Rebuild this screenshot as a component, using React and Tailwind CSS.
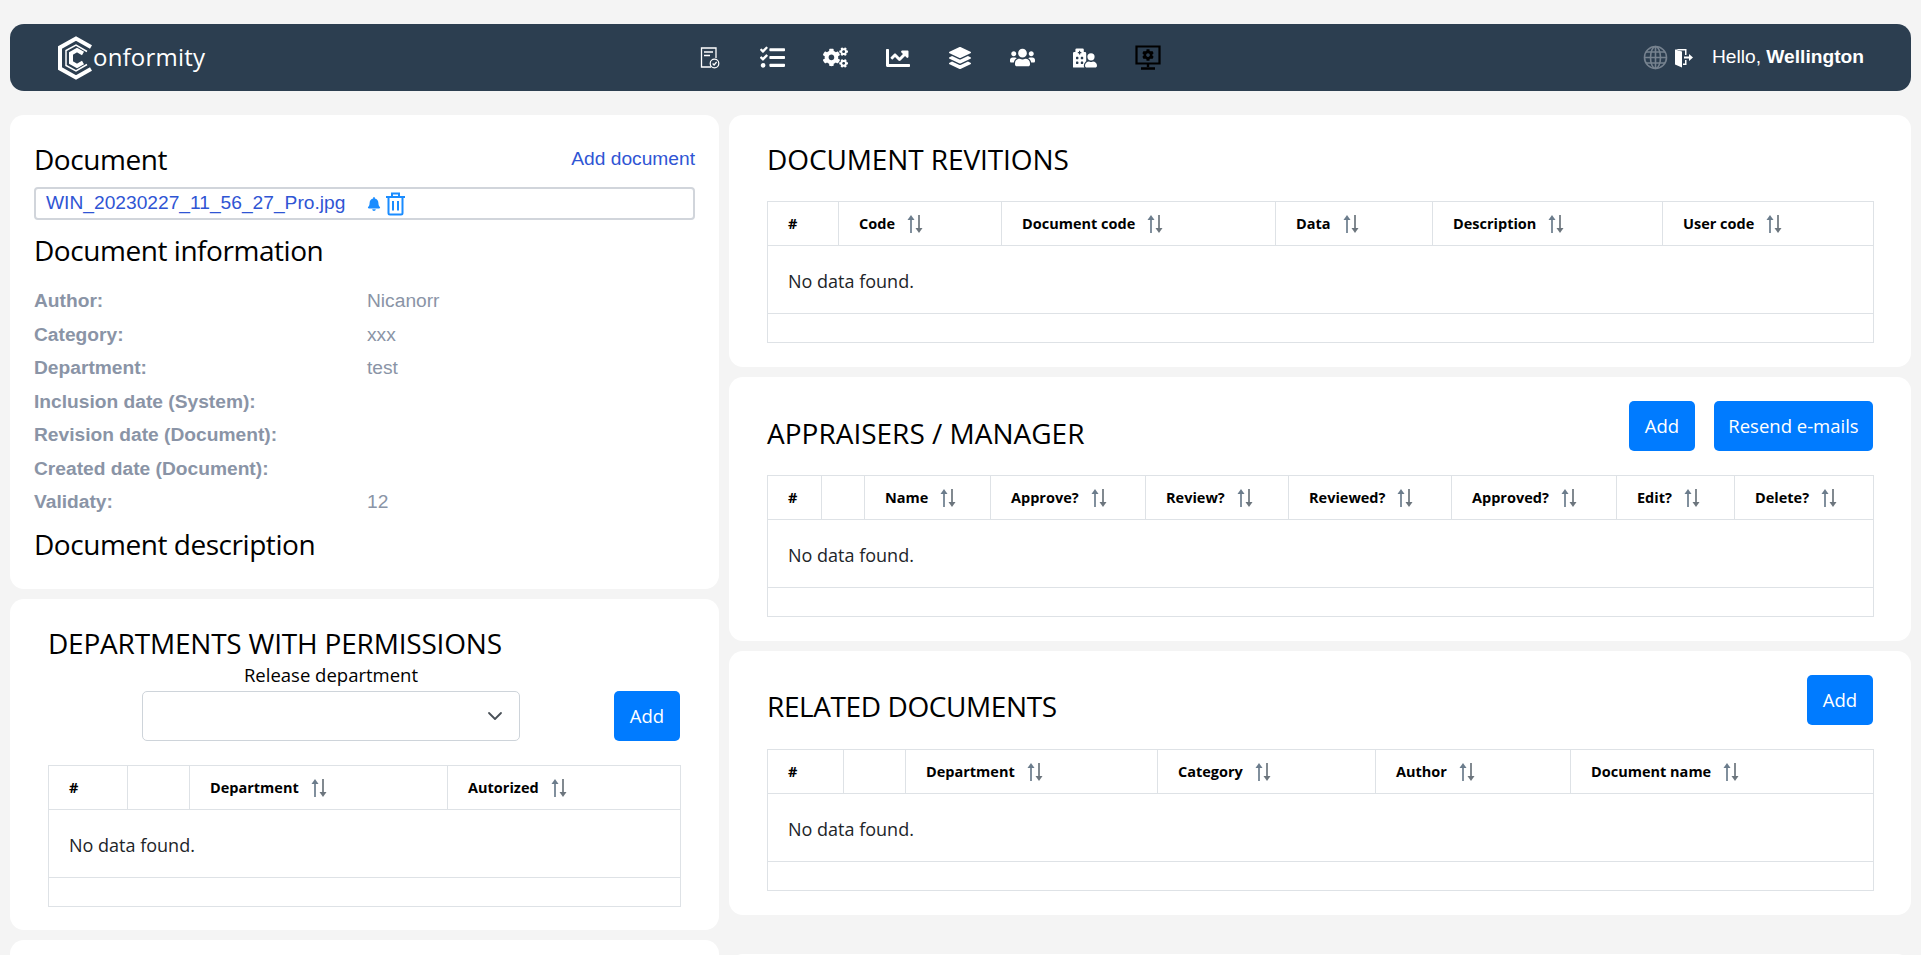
import React from "react";
import { FaTasks, FaCogs, FaCog, FaChartLine, FaLayerGroup, FaUsers, FaHospitalUser, FaBell } from "react-icons/fa";
import { ChevronDown } from "lucide-react";

const segoe = "font-['Open_Sans',sans-serif]";
const arial = "font-['Liberation_Sans',Arial,sans-serif]";

function SortIcon() {
    return (
        <svg width="18" height="20" viewBox="0 0 18 20" className="ml-[11px] shrink-0" fill="none">
            <path d="M5 19V3" stroke="#6b7c8c" strokeWidth="1.7" />
            <path d="M1.500 6 5 1l3.500 5z" fill="#6b7c8c" />
            <path d="M13 1v16" stroke="#6c757d" strokeWidth="1.7" />
            <path d="M9.500 14 13 19l3.500-5z" fill="#6c757d" />
        </svg>
    );
}

function Logo() {
    return (
        <svg width="36" height="44" viewBox="0 0 36 44" className="shrink-0">
            <path d="M33 11 18 2.500 2 11.500v21L18 41.500 33 33" fill="none" stroke="#fff" strokeWidth="4" />
            <path d="M29 15.500 18 9 8 14.500v15L18 35l11-6.500" fill="none" stroke="#fff" strokeWidth="1.500" />
            <path d="M25 17.500 19 14l-6 3.500v9L19 30l6-3.500" fill="none" stroke="#fff" strokeWidth="4" />
        </svg>
    );
}

function DocCheckIcon() {
    return (
        <svg width="20" height="22" viewBox="0 0 20 22" fill="none">
            <path d="M11 20H1.500V1h14.500v10" stroke="#fff" strokeWidth="1.300" />
            <path d="M4 5h9M4 8.500h6" stroke="#fff" strokeWidth="1.300" />
            <circle cx="14.500" cy="16.500" r="4.300" stroke="#fff" strokeWidth="1.200" />
            <path d="m12.600 16.500 1.500 1.500 2.500-3" stroke="#fff" strokeWidth="1.200" />
        </svg>
    );
}

function MonitorIcon() {
    return (
        <svg width="26" height="25" viewBox="0 0 26 25" fill="none">
            <path d="M1.500 1.500h23v17h-23z" stroke="#000" strokeWidth="2.200" />
            <path d="M13 19v3M6 23.500h14" stroke="#000" strokeWidth="2.400" />
            <FaCog x="7" y="4" size={12} color="#000" />
        </svg>
    );
}

function GlobeIcon() {
    return (
        <svg width="25" height="25" viewBox="0 0 25 25" fill="none" stroke="#76828f" strokeWidth="1.600">
            <circle cx="12.500" cy="12.500" r="11" />
            <ellipse cx="12.500" cy="12.500" rx="5" ry="11" />
            <path d="M12.500 1.500v22M1.500 12.500h22M3 7h19M3 18h19" />
        </svg>
    );
}

function DoorIcon() {
    return (
        <svg width="20" height="20" viewBox="0 0 20 20" className="ml-[6px] mt-[2px]">
            <path d="M1 1.500 8 3.500v16l-7-3z" fill="#fff" />
            <path d="M1 1h11.500v6h-1.500V2.500H6zM12.500 12v5H9v-1.500h2V12z" fill="#fff" />
            <path d="M10 8.500h5V6l4 3.500-4 3.500v-2.500h-5z" fill="#fff" />
        </svg>
    );
}

function TrashIcon() {
    return (
        <svg width="21" height="24" viewBox="0 0 21 24" fill="none" className="ml-[4px]">
            <path d="M1 5h19M7 5V1.500h7V5" stroke="#1a8cff" strokeWidth="2" />
            <path d="M3.500 5v16a1.500 1.500 0 0 0 1.500 1.500h11a1.500 1.500 0 0 0 1.500-1.500V5" stroke="#1a8cff" strokeWidth="2" />
            <path d="M8 9v9.500M13 9v9.500" stroke="#1a8cff" strokeWidth="2" />
        </svg>
    );
}

function DataTable({ columns }) {
    return (
        <table className={`w-full table-fixed border-collapse ${segoe} text-[#212529]`}>
            <colgroup>
                {columns.map((c, i) => (
                    <col key={i} style={{ width: c.w }} />
                ))}
            </colgroup>
            <thead>
                <tr className="h-[44px]">
                    {columns.map((c, i) => (
                        <th key={i} className="border border-[#dee2e6] pl-[20px] text-left align-middle text-[14.500px] font-bold text-black">
                            <div className="flex items-center pt-[1px]">
                                <span className="whitespace-nowrap">{c.label}</span>
                                {c.sort && <SortIcon />}
                            </div>
                        </th>
                    ))}
                </tr>
            </thead>
            <tbody>
                <tr className="h-[68px]">
                    <td colSpan={columns.length} className="border border-[#dee2e6] pl-[20px] pt-[3px] text-[18px] text-[#212529]">
                        No data found.
                    </td>
                </tr>
                <tr className="h-[29px]">
                    <td colSpan={columns.length} className="border border-[#dee2e6]"></td>
                </tr>
            </tbody>
        </table>
    );
}

function BlueButton({ children, className = "" }) {
    return (
        <button className={`flex h-[50px] items-center justify-center rounded-[5px] bg-[#007bff] text-[18.500px] text-white ${segoe} ${className}`}>
            {children}
        </button>
    );
}

function Heading({ children, className = "" }) {
    return <h2 className={`text-[28px] leading-[34px] text-black ${segoe} ${className}`}>{children}</h2>;
}

const info = [
    ["Author:", "Nicanorr"],
    ["Category:", "xxx"],
    ["Department:", "test"],
    ["Inclusion date (System):", ""],
    ["Revision date (Document):", ""],
    ["Created date (Document):", ""],
    ["Validaty:", "12"],
];

const navIcons = [
    <DocCheckIcon />,
    <FaTasks size={25} color="#fff" />,
    <FaCogs size={25} color="#fff" />,
    <FaChartLine size={24} color="#fff" />,
    <FaLayerGroup size={22} color="#fff" />,
    <FaUsers size={25} color="#fff" />,
    <FaHospitalUser size={24} color="#fff" />,
    <MonitorIcon />,
];

export default function App() {
    return (
        <div className="h-[955px] overflow-hidden bg-[#f4f4f4] px-[10px] pt-[24px]">
            {/* Barra superior */}
            <nav className="flex h-[67px] items-center rounded-[14px] bg-[#2c3e50] pl-[48px] pr-[47px]">
                <div className="flex items-center">
                    <Logo />
                    <span className={`-ml-[1px] -mt-[2px] text-[24px] tracking-[0.2px] text-white ${segoe}`}>onformity</span>
                </div>
                <div className="ml-[492px] flex items-center gap-[36.500px]">
                    {navIcons.map((icon, i) => (
                        <div key={i} className="flex h-[26px] w-[26px] items-center justify-center">
                            {icon}
                        </div>
                    ))}
                </div>
                <div className={`ml-auto flex items-center text-[19.200px] text-white ${arial}`}>
                    <GlobeIcon />
                    <DoorIcon />
                    <span className="ml-[18px]">
                        Hello, <b>Wellington</b>
                    </span>
                </div>
            </nav>

            <div className="mt-[24px] grid grid-cols-[709px_1182px] gap-x-[10px]">
                {/* Columna izquierda */}
                <div className="flex flex-col gap-[10px]">
                    <section className="h-[474px] rounded-[14px] bg-white pl-[24px] pr-[24px] pt-[27px]">
                        <div className="flex items-start justify-between">
                            <Heading className="tracking-[-0.45px]">Document</Heading>
                            <a className={`mt-[3px] text-[19.200px] text-[#2f55d4] ${arial}`}>Add document</a>
                        </div>
                        <div className={`mt-[11px] flex h-[33px] items-center rounded-[4px] border-2 border-[#d1d5db] pl-[10px] text-[19.200px] text-[#2f55d4] ${arial}`}>
                            <span>WIN_20230227_11_56_27_Pro.jpg</span>
                            <FaBell size={14} color="#1a8cff" className="ml-[22px]" />
                            <TrashIcon />
                        </div>
                        <Heading className="mt-[13px] tracking-[-0.45px]">Document information</Heading>
                        <div className={`mt-[18px] text-[19.200px] ${arial}`}>
                            {info.map(([label, value]) => (
                                <div key={label} className="flex h-[33.500px] items-center">
                                    <span className="w-[333px] font-bold text-[#8a94a6]">{label}</span>
                                    <span className="text-[#8a94a6]">{value}</span>
                                </div>
                            ))}
                        </div>
                        <Heading className="mt-[7px] tracking-[-0.45px]">Document description</Heading>
                    </section>

                    <section className="h-[331px] rounded-[14px] bg-white pl-[38px] pr-[39px] pt-[27px]">
                        <Heading className="tracking-[-0.2px]">DEPARTMENTS WITH PERMISSIONS</Heading>
                        <div className="mt-[2px] flex items-start">
                            <div className="ml-[94px] w-[378px]">
                                <div className={`text-center text-[18.500px] leading-[25px] text-black ${segoe}`}>Release department</div>
                                <div className="mt-[4px] flex h-[50px] items-center justify-end rounded-[5px] border border-[#ced4da] pr-[12px]">
                                    <ChevronDown size={24} color="#495057" strokeWidth={1.800} />
                                </div>
                            </div>
                            <BlueButton className="ml-auto mt-[29px] w-[66px]">Add</BlueButton>
                        </div>
                        <div className="mt-[24px]">
                            <DataTable
                                columns={[
                                    { label: "#", w: "79px" },
                                    { label: "", w: "62px" },
                                    { label: "Department", w: "258px", sort: true },
                                    { label: "Autorized", w: "233px", sort: true },
                                ]}
                            />
                        </div>
                    </section>

                    <section className="h-[200px] rounded-[14px] bg-white"></section>
                </div>

                {/* Columna derecha */}
                <div className="flex flex-col gap-[10px]">
                    <section className="h-[252px] rounded-[14px] bg-white px-[38px] pt-[27px]">
                        <Heading className="tracking-[-0.1px]">DOCUMENT REVITIONS</Heading>
                        <div className="mt-[25px]">
                            <DataTable
                                columns={[
                                    { label: "#", w: "71px" },
                                    { label: "Code", w: "163px", sort: true },
                                    { label: "Document code", w: "274px", sort: true },
                                    { label: "Data", w: "157px", sort: true },
                                    { label: "Description", w: "230px", sort: true },
                                    { label: "User code", w: "211px", sort: true },
                                ]}
                            />
                        </div>
                    </section>

                    <section className="h-[264px] rounded-[14px] bg-white px-[38px] pt-[24px]">
                        <div className="flex items-start justify-between">
                            <Heading className="mt-[15px] tracking-normal">APPRAISERS / MANAGER</Heading>
                            <div className="flex gap-[19px]">
                                <BlueButton className="w-[66px]">Add</BlueButton>
                                <BlueButton className="w-[159px]">Resend e-mails</BlueButton>
                            </div>
                        </div>
                        <div className="mt-[24px]">
                            <DataTable
                                columns={[
                                    { label: "#", w: "54px" },
                                    { label: "", w: "43px" },
                                    { label: "Name", w: "126px", sort: true },
                                    { label: "Approve?", w: "155px", sort: true },
                                    { label: "Review?", w: "143px", sort: true },
                                    { label: "Reviewed?", w: "163px", sort: true },
                                    { label: "Approved?", w: "165px", sort: true },
                                    { label: "Edit?", w: "118px", sort: true },
                                    { label: "Delete?", w: "139px", sort: true },
                                ]}
                            />
                        </div>
                    </section>

                    <section className="h-[264px] rounded-[14px] bg-white px-[38px] pt-[24px]">
                        <div className="flex items-start justify-between">
                            <Heading className="mt-[14px] tracking-[-0.4px]">RELATED DOCUMENTS</Heading>
                            <BlueButton className="w-[66px]">Add</BlueButton>
                        </div>
                        <div className="mt-[24px]">
                            <DataTable
                                columns={[
                                    { label: "#", w: "76px" },
                                    { label: "", w: "62px" },
                                    { label: "Department", w: "252px", sort: true },
                                    { label: "Category", w: "218px", sort: true },
                                    { label: "Author", w: "195px", sort: true },
                                    { label: "Document name", w: "303px", sort: true },
                                ]}
                            />
                        </div>
                    </section>

                    <section className="mt-[29px] h-[200px] rounded-[14px] bg-white"></section>
                </div>
            </div>
        </div>
    );
}
